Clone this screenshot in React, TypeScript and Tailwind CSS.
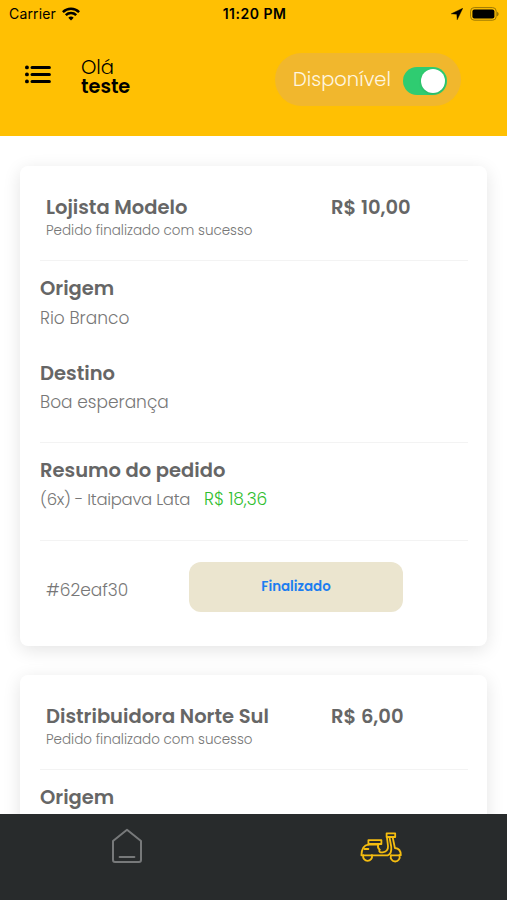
import React, { useState } from "react";

type Pedido = {
  nome: string;
  valor: string;
  status: string;
  id?: string;
  origem?: string;
  destino?: string;
  item?: string;
  preco?: string;
};

const pedidos: Pedido[] = [
  {
    nome: "Lojista Modelo",
    valor: "R$ 10,00",
    status: "Pedido finalizado com sucesso",
    id: "#62eaf30",
    origem: "Rio Branco",
    destino: "Boa esperança",
    item: "(6x) - Itaipava Lata",
    preco: "R$ 18,36",
  },
  {
    nome: "Distribuidora Norte Sul",
    valor: "R$ 6,00",
    status: "Pedido finalizado com sucesso",
  },
];

function StatusBar() {
  return (
    <div className="flex h-7 items-center justify-between pl-[9px] pr-[8px] font-['Inter',sans-serif] text-black">
      <div className="flex w-[150px] items-center gap-[6px]">
        <span className="text-[14px] leading-7 tracking-[0.15px]">Carrier</span>
        <svg width="18" height="14" viewBox="0 0 18 14" fill="none" stroke="#000" strokeWidth="2.5">
          <path d="M0.9 5.1a11.6 11.6 0 0 1 16.2 0" />
          <path d="M3.8 8.2a7.4 7.4 0 0 1 10.4 0" />
          <path d="M9 13.6l-2.7-2.8a3.9 3.9 0 0 1 5.4 0z" fill="#000" stroke="none" />
        </svg>
      </div>
      <span className="-mr-[1px] text-[14px] font-semibold leading-7 tracking-[0.5px]">11:20 PM</span>
      <div className="flex w-[150px] items-center justify-end gap-[7px]">
        <svg width="12" height="12" viewBox="0 0 12 12">
          <path d="M11.8 0.2L0.2 5.800l5.600 0.400 0.400 5.600z" fill="#000" stroke="#000" strokeWidth="0.4" />
        </svg>
        <svg width="29" height="14" viewBox="0 0 29 14">
          <rect x="0.6" y="0.6" width="25.6" height="12.6" rx="3.6" fill="none" stroke="#9c7805" strokeWidth="1" />
          <rect x="2.4" y="2.4" width="22" height="9" rx="2" fill="#000" />
          <path d="M27 4.7c2.2 0.8 2.2 3.8 0 4.6z" fill="#9c7805" />
        </svg>
      </div>
    </div>
  );
}

function Header() {
  const [disponivel, setDisponivel] = useState(true);
  return (
    <header className="h-[136px] shrink-0 bg-[#ffc003]">
      <StatusBar />
      <div className="flex items-start pl-[25px] pt-[25px]">
        <button className="mt-[12px]">
          <svg width="26" height="19" viewBox="0 0 26 19" stroke="#000" strokeWidth="3" strokeLinecap="round">
            <path d="M7 2.4h17.4M7 9.4h17.4M7 16.4h17.4" />
            <path d="M1.9 2.4h0.1M1.9 9.4h0.1M1.9 16.4h0.1" strokeWidth="3.8" />
          </svg>
        </button>
        <div className="ml-[30px] mt-[5px] w-[194px] text-black">
          <div className="text-[19.5px] font-light leading-[19px]">Olá</div>
          <div className="text-[19.3px] font-semibold leading-[19px]">teste</div>
        </div>
        <div className="flex h-[53px] w-[186px] items-center rounded-full bg-[#f1b72d] pl-[18px]">
          <span className="w-[110px] whitespace-nowrap pt-[1px] text-[19.5px] font-light text-[#fff6e0]">
            Disponível
          </span>
          <button
            onClick={() => setDisponivel(!disponivel)}
            className={`mt-[3px] flex h-[28px] w-[44px] items-center rounded-full px-[2px] ${
              disponivel ? "justify-end bg-[#2fcc71]" : "justify-start bg-gray-300"
            }`}
          >
            <span className="h-[24px] w-[24px] rounded-full bg-white shadow"></span>
          </button>
        </div>
      </div>
    </header>
  );
}

function Titulo({ children }: { children: React.ReactNode }) {
  return <div className="text-[19.5px] font-semibold leading-7 text-[#666666]">{children}</div>;
}

function CardPedido({ pedido }: { pedido: Pedido }) {
  return (
    <div className="h-[480px] shrink-0 rounded-[8px] bg-white px-5 pt-[30px] text-[#777777] shadow-[0_4px_18px_rgba(0,0,0,0.11)]">
      <div className="mr-[-1px] flex h-[65px] border-b border-[#f3f3f3] pl-[6px]">
        <div className="w-[285px] whitespace-nowrap">
          <div className="text-[19.5px] font-semibold leading-6 text-[#666666]">{pedido.nome}</div>
          <div className="text-[13.5px] font-light leading-[22px]">{pedido.status}</div>
        </div>
        <div className="text-[19.5px] font-semibold leading-6 text-[#666666]">{pedido.valor}</div>
      </div>
      <div className="pt-[14px]">
        <Titulo>Origem</Titulo>
        {pedido.origem && <div className="pt-[1px] text-[17px] font-light leading-[29px]">{pedido.origem}</div>}
      </div>
      {pedido.destino && (
        <div className="mr-[-1px] h-[110px] border-b border-[#f3f3f3] pt-[27px]">
          <Titulo>Destino</Titulo>
          <div className="text-[17px] font-light leading-[29px]">{pedido.destino}</div>
        </div>
      )}
      {pedido.item && (
        <div className="mr-[-1px] h-[98px] border-b border-[#f3f3f3] pt-[14px]">
          <Titulo>Resumo do pedido</Titulo>
          <div className="flex whitespace-nowrap font-light leading-[29px]">
            <span className="w-[164px] text-[16.5px] tracking-[-0.3px]">{pedido.item}</span>
            <span className="text-[17px] tracking-[-0.1px] text-[#2fbe2f]">{pedido.preco}</span>
          </div>
        </div>
      )}
      {pedido.id && (
        <div className="flex pl-[6px] pt-[21px]">
          <div className="w-[143px] text-[17px] font-light leading-[56px]">{pedido.id}</div>
          <button className="h-[50px] w-[214px] rounded-[12px] bg-[#ebe5cf] text-[13.4px] font-semibold text-[#1c7df0]">
            Finalizado
          </button>
        </div>
      )}
    </div>
  );
}

function TabBar() {
  return (
    <nav className="flex h-[86px] shrink-0 bg-[#282b2c]">
      <button className="flex w-1/2 justify-center pt-[14px]">
        <svg width="32" height="36" viewBox="0 0 32 36" fill="none" stroke="#77797a" strokeWidth="2" strokeLinejoin="round">
          <path d="M2 13L16 1.800 30 13v19a2 2 0 0 1-2 2H4a2 2 0 0 1-2-2z" />
          <path d="M8.600 29h14.800" strokeLinecap="round" />
        </svg>
      </button>
      <button className="flex w-1/2 justify-center pl-[1px] pt-[18px]">
        <svg
          width="42"
          height="31"
          viewBox="0 0 42 31"
          fill="none"
          stroke="#f5bd10"
          strokeWidth="1.8"
          strokeLinejoin="round"
          strokeLinecap="round"
        >
          <rect x="8.4" y="8.2" width="13" height="3.8" />
          <path d="M8.400 12.600C4 13 1.600 17.500 1.400 23.400H3.200" />
          <path d="M8.400 12.600h10c-1 2-0.300 3.800 1.200 5" />
          <path d="M11.800 23.400H27.600C30.800 22.300 31.600 18 31.200 14.500L29.400 5" />
          <path d="M19.600 17.600c-1.200 2.200 0.800 3 3 2.800 3.400-0.300 5.800-2.700 5.400-6.400L26.900 5" />
          <path d="M26.600 1.400h8.600v3.600h-8.600z" />
          <path d="M32.600 5l2.300 11c4 0.300 5.900 3.200 5.900 7.200H39.400" />
          <path d="M4.600 17h3.800M3.200 23.400H12M31 23.400h8.400" />
          <path d="M3.200 23.400a4.500 4.500 0 1 0 8.800 0" />
          <path d="M31 23.400a4.500 4.500 0 1 0 8.400 0" />
        </svg>
      </button>
    </nav>
  );
}

export default function App() {
  return (
    <div className="flex h-[900px] w-[507px] flex-col overflow-hidden bg-white font-['Poppins','Inter',sans-serif]">
      <Header />
      <main className="flex min-h-0 flex-1 flex-col gap-[29px] overflow-hidden px-5 pt-[30px]">
        {pedidos.map((pedido) => (
          <CardPedido key={pedido.nome} pedido={pedido} />
        ))}
      </main>
      <TabBar />
    </div>
  );
}
